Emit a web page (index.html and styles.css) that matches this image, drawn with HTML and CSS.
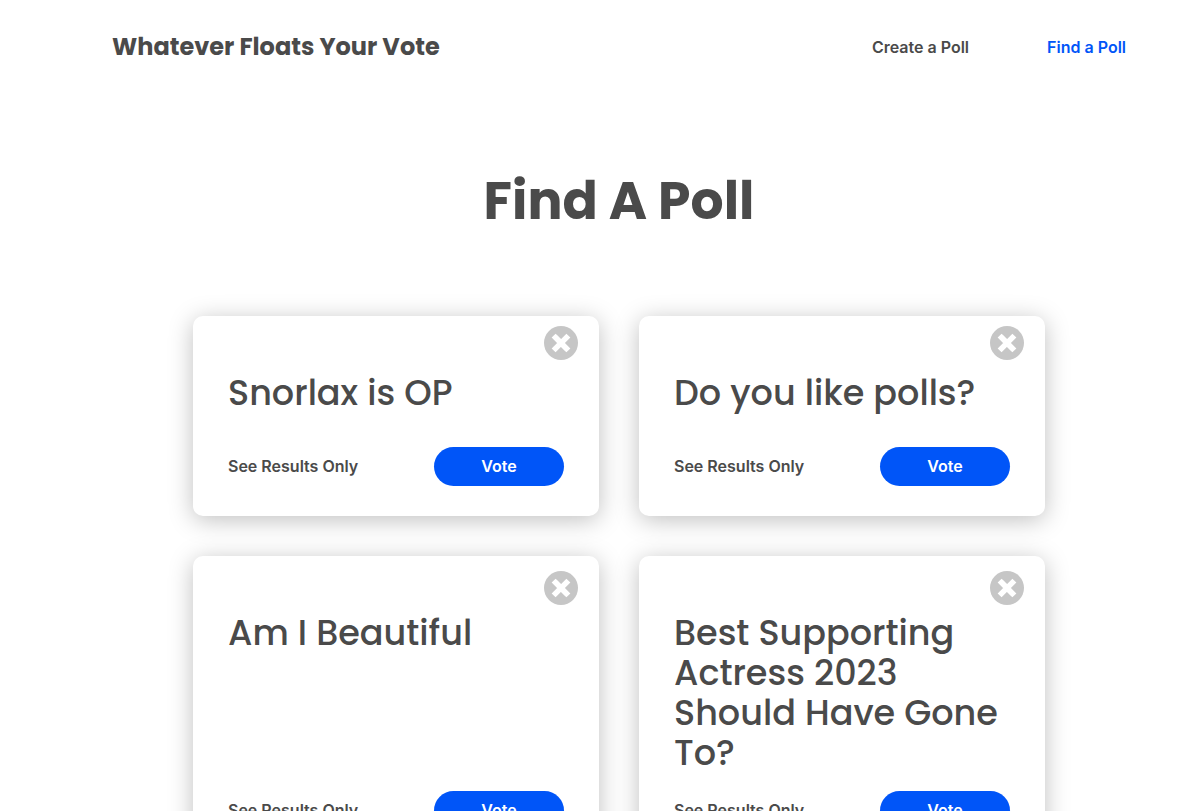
FILE: index.html
```html
<!DOCTYPE html>
<html lang="en">
<head>
<meta charset="utf-8">
<meta name="viewport" content="width=device-width, initial-scale=1">
<title>Whatever Floats Your Vote</title>
<link rel="stylesheet" href="styles.css">
</head>
<body>
<svg class="sprite" aria-hidden="true">
  <symbol id="close" viewBox="0 0 34 34">
    <circle cx="17" cy="17" r="17" fill="#c6c6c6"/>
    <path d="M11.6 11.6 L22.4 22.4 M22.4 11.6 L11.6 22.4" stroke="#fff" stroke-width="5.6" stroke-linecap="square" fill="none"/>
  </symbol>
</svg>
<header class="header">
  <a class="brand" href="#">Whatever Floats Your Vote</a>
  <nav class="nav">
    <a class="nav-link" href="#">Create a Poll</a>
    <a class="nav-link nav-link-active" href="#" aria-current="page">Find a Poll</a>
  </nav>
</header>
<main class="main">
  <h1 class="page-title">Find A Poll</h1>
  <div class="polls">
    <article class="card">
      <button class="close" type="button" aria-label="Delete poll"><svg class="close-icon"><use href="#close"/></svg></button>
      <h2 class="card-title">Snorlax is OP</h2>
      <div class="actions">
        <a class="results" href="#">See Results Only</a>
        <button class="vote" type="button">Vote</button>
      </div>
    </article>
    <article class="card">
      <button class="close" type="button" aria-label="Delete poll"><svg class="close-icon"><use href="#close"/></svg></button>
      <h2 class="card-title">Do you like polls?</h2>
      <div class="actions">
        <a class="results" href="#">See Results Only</a>
        <button class="vote" type="button">Vote</button>
      </div>
    </article>
    <article class="card">
      <button class="close" type="button" aria-label="Delete poll"><svg class="close-icon"><use href="#close"/></svg></button>
      <h2 class="card-title">Am I Beautiful</h2>
      <div class="actions">
        <a class="results" href="#">See Results Only</a>
        <button class="vote" type="button">Vote</button>
      </div>
    </article>
    <article class="card">
      <button class="close" type="button" aria-label="Delete poll"><svg class="close-icon"><use href="#close"/></svg></button>
      <h2 class="card-title">Best Supporting Actress 2023 Should Have Gone To?</h2>
      <div class="actions">
        <a class="results" href="#">See Results Only</a>
        <button class="vote" type="button">Vote</button>
      </div>
    </article>
  </div>
</main>
</body>
</html>
```
FILE: styles.css
```css
* {
  box-sizing: border-box;
}

html {
  scrollbar-width: none;
}

body {
  margin: 0;
  background: #fff;
  color: #4a4a4a;
  font-family: Inter, Roboto, sans-serif;
  font-size: 16px;
  line-height: 20px;
}

.sprite {
  display: none;
}

.header {
  display: flex;
  align-items: center;
  justify-content: space-between;
  padding: 32px 78px 32px 112px;
}

.brand {
  color: inherit;
  font-family: Poppins, Inter, sans-serif;
  font-size: 24px;
  font-weight: 700;
  line-height: 30px;
  text-decoration: none;
}

.nav {
  display: flex;
  gap: 78px;
}

.nav-link,
.results {
  color: inherit;
  font-weight: 600;
  text-decoration: none;
}

.nav-link-active {
  color: #0055f8;
}

.main {
  padding: 72px 0 40px 34px;
}

.page-title {
  margin: 0 0 80px;
  font-family: Poppins, Inter, sans-serif;
  font-size: 52px;
  font-weight: 700;
  line-height: 70px;
  text-align: center;
}

.polls {
  display: grid;
  grid-template-columns: repeat(auto-fit, minmax(320px, 1fr));
  gap: 40px;
  max-width: 852px;
  margin: 0 auto;
}

.card {
  position: relative;
  display: flex;
  flex-direction: column;
  justify-content: space-between;
  gap: 18px;
  min-height: 200px;
  padding: 57px 35px 30px;
  border-radius: 10px;
  background: #fff;
  box-shadow: 0 4px 24px rgba(0, 0, 0, 0.25);
}

.close {
  position: absolute;
  top: 5%;
  right: 21px;
  padding: 0;
  border: 0;
  background: none;
  cursor: pointer;
}

.close-icon {
  display: block;
  width: 34px;
  height: 34px;
}

.card-title {
  margin: 0;
  font-family: Poppins, Inter, sans-serif;
  font-size: 35px;
  font-weight: 500;
  line-height: 40px;
}

.actions {
  display: flex;
  align-items: center;
  justify-content: space-between;
}

.results {
  padding-bottom: 2px;
}

.vote {
  width: 130px;
  height: 39px;
  padding: 0 0 2px;
  border: 0;
  border-radius: 20px;
  background: #0055f8;
  color: #fff;
  font: inherit;
  font-weight: 600;
  cursor: pointer;
}
```
